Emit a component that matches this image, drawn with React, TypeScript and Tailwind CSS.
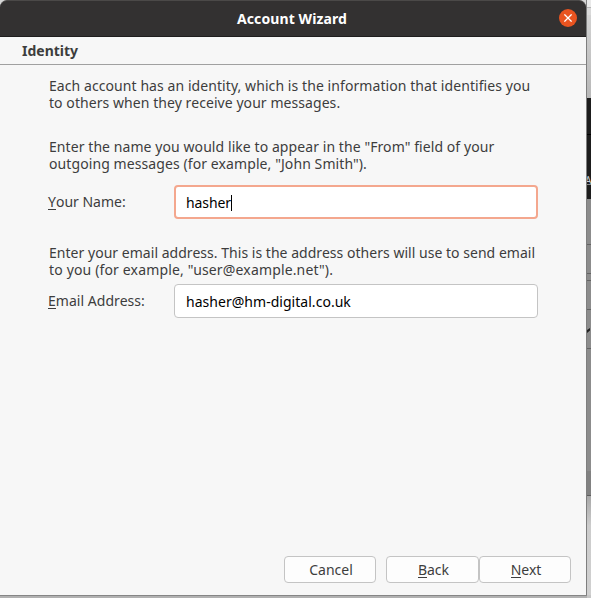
import React from 'react';

function Key({ children, className = '' }: { children: string; className?: string }) {
  return <span className={`inline-block h-[17px] border-b border-[#3d3d3d] ${className}`}>{children}</span>;
}

const button =
  'flex h-[27px] items-center justify-center rounded-[4px] border border-[#c4c4c4] bg-[#fdfdfd] pl-[2px] text-[#3d3d3d] leading-[17px]';

export default function App() {
  return (
    <div className="flex h-[598px] w-[591px] flex-col overflow-hidden bg-[#d6d6d6] font-['Noto_Sans','Open_Sans',sans-serif] text-[14px] leading-[17px] text-[#3d3d3d]">
      <div className="flex h-[595px]">
        <main className="flex w-[586px] shrink-0 flex-col rounded-t-[7px] bg-[#f7f7f7]">
          <header className="flex h-[37px] shrink-0 items-center rounded-t-[7px] border-t border-b border-t-[#4b4948] border-b-[#1f1e1e] bg-[#333131] pr-[9px]">
            <h1 className="flex-1 pl-[25px] text-center text-[14px] font-bold tracking-[0.1px] text-white">Account Wizard</h1>
            <button aria-label="Close" className="-mt-px flex size-[18px] items-center justify-center rounded-full bg-[#e95420]">
              <svg width="8" height="8" viewBox="0 0 8 8" fill="none" stroke="#fff" strokeWidth="1.3">
                <path d="M0.4 0.4 7.6 7.6M7.6 0.4 0.4 7.6" />
              </svg>
            </button>
          </header>
          <h2 className="flex h-7 shrink-0 items-center border-b border-[#a0a0a0] pl-[22px] font-bold">Identity</h2>

          <section className="flex flex-1 flex-col pt-3 whitespace-nowrap">
            <p className="pl-[49px]">
              <span className="block tracking-[0.075px]">Each account has an identity, which is the information that identifies you</span>
              <span className="block tracking-[0.065px]">to others when they receive your messages.</span>
            </p>
            <p className="mt-[27px] pl-[49px]">
              <span className="block tracking-[0.075px]">Enter the name you would like to appear in the "From" field of your</span>
              <span className="block tracking-[0.09px]">outgoing messages (for example, "John Smith").</span>
            </p>
            <div className="mt-[13px] flex h-[34px] items-center pl-12">
              <label className="w-[126px] pb-px"><Key>Y</Key>our Name:</label>
              <div className="flex h-[34px] w-[364px] items-center rounded-[4px] border-2 border-[#f4a78e] bg-white pt-px pl-[10px] tracking-[-0.1px] text-black">
                hasher<span className="h-4 w-px bg-black" />
              </div>
            </div>
            <p className="mt-[25px] pl-[49px]">
              <span className="block tracking-[0.03px]">Enter your email address. This is the address others will use to send email</span>
              <span className="block tracking-[0.155px]">to you (for example, "user@example.net").</span>
            </p>
            <div className="mt-[6px] flex h-[34px] items-center pl-12">
              <label className="w-[126px] pb-px tracking-[0.04px]"><Key>E</Key>mail Address:</label>
              <div className="flex h-[34px] w-[364px] items-center rounded-[4px] border border-[#c4c4c4] bg-white pt-px pl-[11px] tracking-[0.03px] text-black">
                hasher@hm-digital.co.uk
              </div>
            </div>
            <footer className="mt-auto mb-3 flex pl-[284px]">
              <button className={`${button} w-[92px]`}>Cancel</button>
              <button className={`${button} ml-[10px] w-[93px]`}><Key>B</Key>ack</button>
              <button className={`${button} w-[92px]`}><Key>N</Key>ext</button>
            </footer>
          </section>
        </main>

        <aside className="flex w-[5px] shrink-0 flex-col overflow-hidden border-l border-[#7e7e7e]">
          <div className="h-[7px] bg-[#e9e9e9]" />
          <div className="h-2 border-t border-[#b5b5b5] bg-[#d9d9d9]" />
          <div className="h-[83px] bg-linear-to-b from-[#d2d2d2] to-[#b8b8b8]" />
          <div className="h-[37px] border-b border-black bg-[#1d1d1d]" />
          <div className="h-16 bg-[#1d1d1d] pt-[39px] text-[10px] leading-[12px] text-[#c4ccd4]">
            <span className="-ml-0.5 block h-[11px] border-b border-[#8a8a8a]">A</span>
          </div>
          <div className="h-[46px] border-b border-[#636363] bg-[#8c8c8c]" />
          <div className="h-[29px] border-b border-[#636363] bg-[#8c8c8c]" />
          <div className="h-[7px] border-b border-[#636363] bg-[#8c8c8c]" />
          <div className="h-[29px] border-b border-[#636363] bg-[#8c8c8c]" />
          <div className="h-[39px] border-b border-[#636363] bg-[#8c8c8c] pt-[18px]">
            <svg width="4" height="5" viewBox="0 0 4 5"><path d="M0 2 3 0v2.5L0 5Z" fill="#222" /></svg>
          </div>
          <div className="h-[122px] bg-[#8c8c8c]" />
          <div className="h-[25px] border-b border-[#5d5d5d] bg-[#818181]" />
          <div className="flex-1 bg-linear-to-b from-[#a8a8a8] via-[#cccccc] via-30% to-[#d0d0d0]" />
        </aside>
      </div>
      <div className="flex h-[3px]">
        <div className="w-[587px] border-t border-[#868686] bg-[#b1b1b1]" />
        <div className="flex-1 bg-[#c6c6c6]" />
      </div>
    </div>
  );
}
